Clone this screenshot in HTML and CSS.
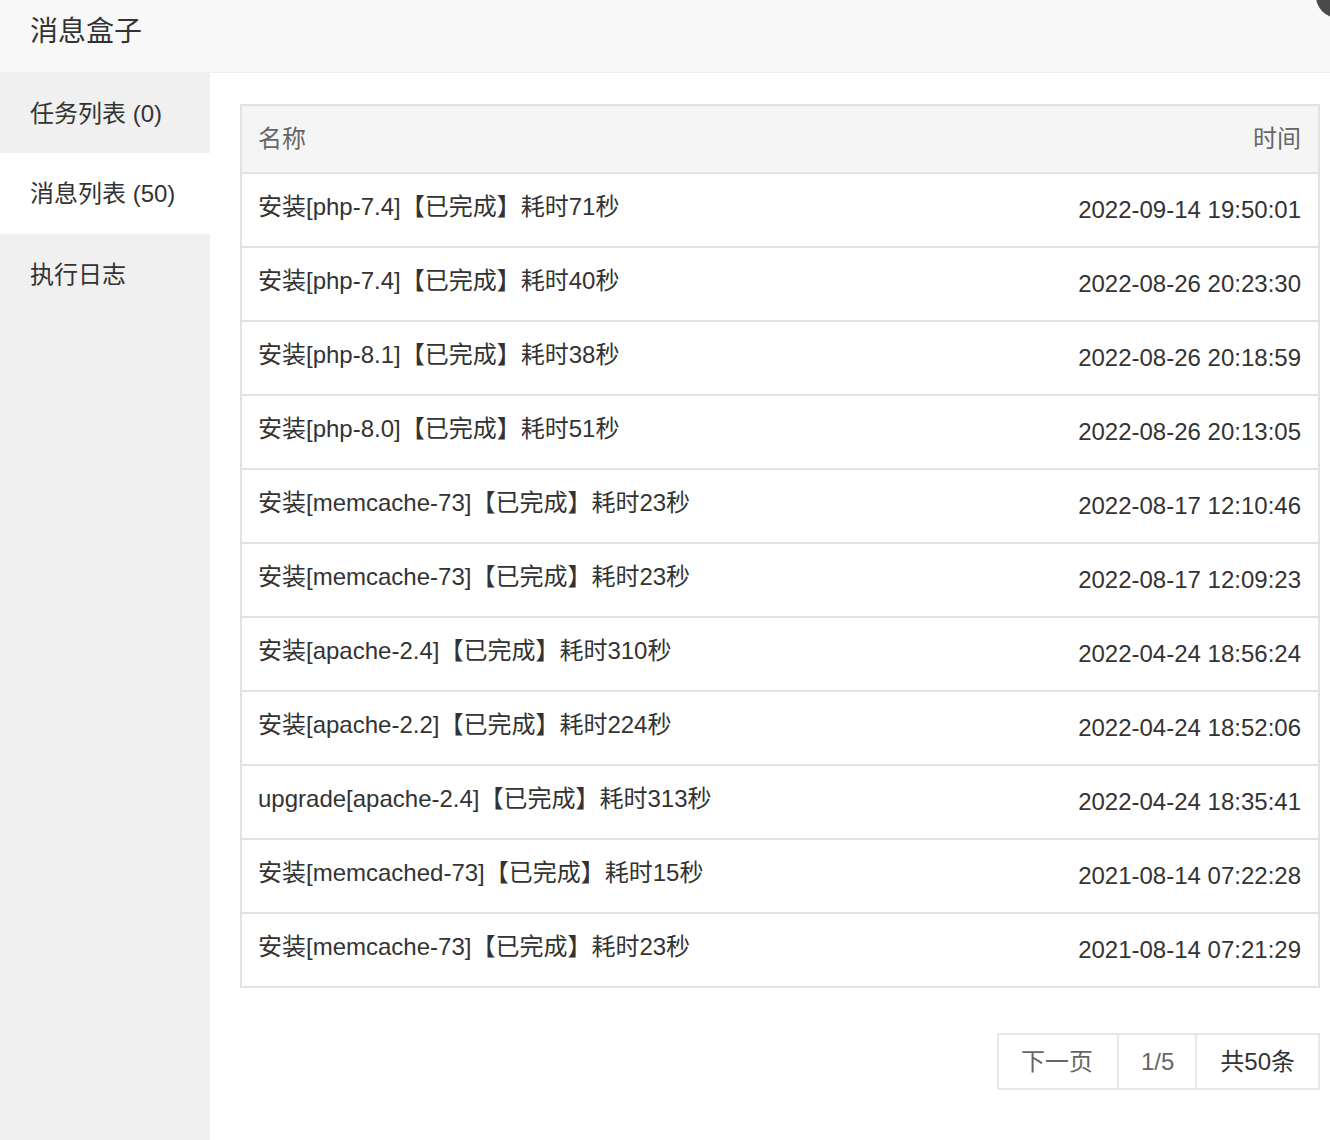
FILE: index.html
```html
<!DOCTYPE html>
<html lang="zh">
<head>
<meta charset="utf-8">
<title>消息盒子</title>
<link rel="stylesheet" href="styles.css">
</head>
<body>
<div class="layer">
  <div class="title">消息盒子</div>
  <div class="close"></div>
  <div class="main">
    <ul class="side">
      <li class="item">任务列表 (0)</li>
      <li class="item active">消息列表 (50)</li>
      <li class="item">执行日志</li>
    </ul>
    <div class="content">
      <table class="list">
        <thead>
          <tr><th class="name">名称</th><th class="time">时间</th></tr>
        </thead>
        <tbody>
          <tr><td class="name">安装[php-7.4]【已完成】耗时71秒</td><td class="time">2022-09-14 19:50:01</td></tr>
          <tr><td class="name">安装[php-7.4]【已完成】耗时40秒</td><td class="time">2022-08-26 20:23:30</td></tr>
          <tr><td class="name">安装[php-8.1]【已完成】耗时38秒</td><td class="time">2022-08-26 20:18:59</td></tr>
          <tr><td class="name">安装[php-8.0]【已完成】耗时51秒</td><td class="time">2022-08-26 20:13:05</td></tr>
          <tr><td class="name">安装[memcache-73]【已完成】耗时23秒</td><td class="time">2022-08-17 12:10:46</td></tr>
          <tr><td class="name">安装[memcache-73]【已完成】耗时23秒</td><td class="time">2022-08-17 12:09:23</td></tr>
          <tr><td class="name">安装[apache-2.4]【已完成】耗时310秒</td><td class="time">2022-04-24 18:56:24</td></tr>
          <tr><td class="name">安装[apache-2.2]【已完成】耗时224秒</td><td class="time">2022-04-24 18:52:06</td></tr>
          <tr><td class="name">upgrade[apache-2.4]【已完成】耗时313秒</td><td class="time">2022-04-24 18:35:41</td></tr>
          <tr><td class="name">安装[memcached-73]【已完成】耗时15秒</td><td class="time">2021-08-14 07:22:28</td></tr>
          <tr><td class="name">安装[memcache-73]【已完成】耗时23秒</td><td class="time">2021-08-14 07:21:29</td></tr>
        </tbody>
      </table>
      <div class="pager">
        <span class="cell next">下一页</span>
        <span class="cell page">1/5</span>
        <span class="cell total">共50条</span>
      </div>
    </div>
  </div>
</div>
</body>
</html>
```
FILE: styles.css
```css
html, body {
  margin: 0;
  padding: 0;
  background: #fff;
}
body {
  font-family: "Liberation Sans", "Noto Sans CJK SC", sans-serif;
  color: #333;
  overflow: hidden;
}
.layer {
  position: relative;
  width: 1330px;
  height: 1140px;
}
.title {
  height: 72px;
  line-height: 64px;
  padding-left: 30px;
  font-size: 28px;
  color: #333;
  background: #f8f8f8;
  border-bottom: 1px solid #eee;
}
.close {
  position: absolute;
  left: 1316px;
  top: -26px;
  width: 44px;
  height: 44px;
  border-radius: 50%;
  background: #4a4a4a;
}
.main {
  display: flex;
  height: 1067px;
}
.side {
  list-style: none;
  margin: 0;
  padding: 0;
  width: 210px;
  flex: none;
  background: #f0f0f0;
}
.item {
  height: 80px;
  line-height: 82px;
  padding-left: 30px;
  font-size: 24px;
  color: #333;
}
.item.active {
  background: #fff;
  height: 81px;
  line-height: 81px;
}
.content {
  flex: 1;
  padding: 31px 10px 0 30px;
}
.list {
  width: 1080px;
  border-collapse: collapse;
  border: 2px solid #e2e2e2;
  font-size: 24px;
  line-height: 28px;
}
.list th {
  height: 66px;
  background: #f5f5f5;
  font-weight: normal;
  color: #666;
  padding: 0 17px 0 16px;
  border-bottom: 2px solid #e2e2e2;
}
.list td {
  height: 72px;
  padding: 0 17px 0 16px;
  border-bottom: 2px solid #e2e2e2;
  color: #333;
}
.list td.name {
  vertical-align: top;
  padding-top: 19px;
  height: 53px;
}
.list td.time {
  vertical-align: middle;
}
.list .name { text-align: left; }
.list .time { text-align: right; }
.pager {
  display: flex;
  justify-content: flex-end;
  margin-top: 45px;
}
.cell {
  height: 53px;
  line-height: 53px;
  padding: 0 22px;
  font-size: 24px;
  border: 2px solid #e8e8e8;
  color: #666;
}
.cell + .cell { border-left: none; }
.next { padding: 0 24px 0 22px; }
.page { padding: 0 21px 0 22px; }
.total { color: #333; padding: 0 23px; }
```
